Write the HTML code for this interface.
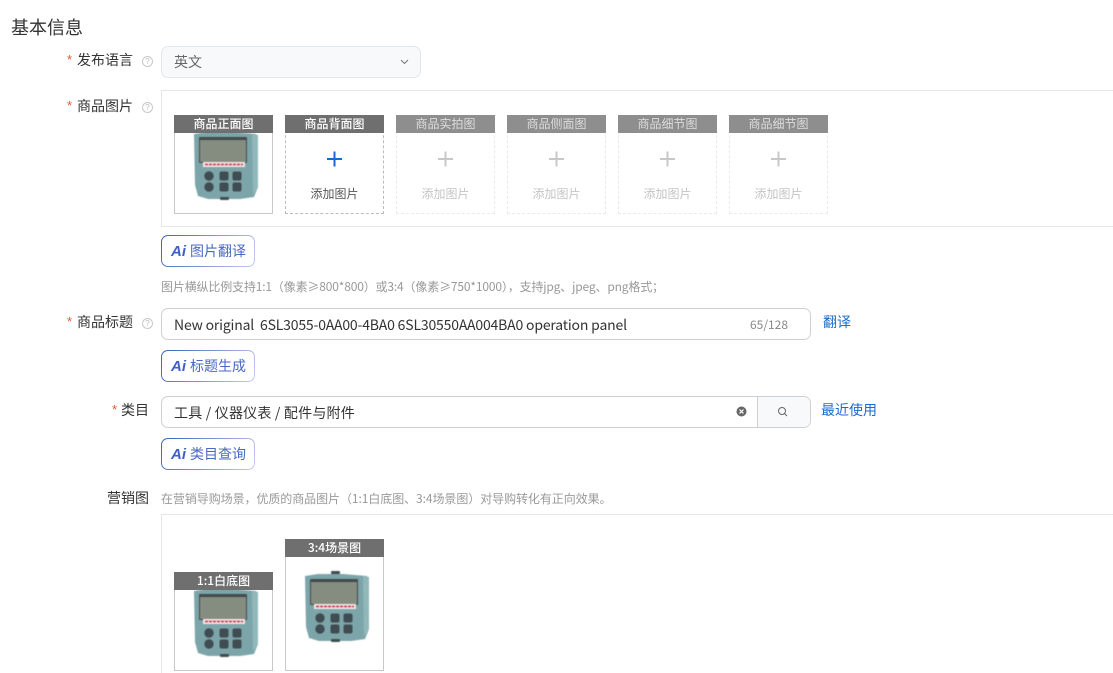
<!DOCTYPE html>
<html><head><meta charset="utf-8">
<style>
html,body{margin:0;padding:0;background:#fff;overflow:hidden;height:673px}
body{width:1113px;position:relative;font-family:"Noto Sans CJK SC","Liberation Sans",sans-serif;color:#333;font-size:14px}
.a{position:absolute;white-space:nowrap;line-height:18px}
.lbl{font-size:14px;color:#333}
.s{color:#e4572e;font-size:13px;font-family:"Liberation Sans",sans-serif}
.q{position:absolute;width:9px;height:9px;border:1px solid #c8c8c8;border-radius:50%;color:#bbb;font-size:8px;line-height:9px;text-align:center;font-family:"Liberation Sans",sans-serif}
.box{position:absolute;box-sizing:border-box;width:99px;height:99px;top:115px}
.hd{position:absolute;left:0;top:0;width:99px;height:18px;background:#6f6f6f;color:#fff;font-size:12px;font-weight:500;line-height:18px;text-align:center}
.ph{border:1px dashed #bbb}
.ph .hd{left:-1px;top:-1px}
.ph .pl{position:absolute;left:0;right:0;top:34px;height:18px}
.ph .t{position:absolute;left:0;right:0;top:69px;text-align:center;font-size:12px;line-height:18px;color:#555}
.off{border-color:#eaeaea}
.off .hd{background:#8e8e8e;color:#ddd;font-weight:400}
.off .t{color:#c4c4c4}
.panel{position:absolute;left:161px;width:960px;box-sizing:border-box;border:1px solid #e6e6e6}
.ai{position:absolute;left:161px;width:94px;height:32px;box-sizing:border-box;border-radius:7px;border:1px solid transparent;background:linear-gradient(#fff,#fff) padding-box,linear-gradient(120deg,#3a62b8,#c9c9f2) border-box;color:#4a68c4;font-size:14px;line-height:30px}
.ai b{position:absolute;left:9px;top:1px;font:italic bold 15px/29px "Liberation Sans",sans-serif;color:#3f60c8}
.ai span{position:absolute;left:28px;top:0}
.inp{position:absolute;box-sizing:border-box;border:1px solid #cfcfcf;border-radius:7px;background:#fff}
.link{color:#1a6bd0;font-size:14px}
.dev{position:absolute;filter:blur(.6px)}
</style></head><body>
<svg width="0" height="0" style="position:absolute"><defs>
<g id="d">
<path d="M20 19 L33 17 L58 17 L82 19 L84 30 L84 72 L80 82 L66 84 L34 84 L24 81 L21 70 Z" fill="#7ca5aa"/>
<path d="M78 19 L84 20 L84 72 L79 80 Z" fill="#90b8bb"/>
<rect x="25" y="22" width="48" height="26" rx="1" fill="#414b4c"/>
<rect x="26" y="25" width="46" height="22" fill="#858c80"/>
<rect x="29" y="47" width="42" height="5" fill="#f4e8e8"/>
<path d="M31 49.500 H69" stroke="#c0283a" stroke-width="1.600" stroke-dasharray="3 1"/>
<g fill="#3f4c52">
<circle cx="35" cy="61" r="4.700"/><circle cx="35" cy="72" r="4.700"/>
<rect x="45.500" y="56.500" width="9" height="9" rx="2"/><rect x="58.500" y="56.500" width="9" height="9" rx="2"/>
<rect x="45.500" y="67.500" width="9" height="9" rx="2"/><rect x="58.500" y="67.500" width="9" height="9" rx="2"/>
<rect x="46" y="14" width="9" height="3" rx="1"/><rect x="46" y="82" width="9" height="3" rx="1"/>
</g></g>
<path id="p" d="M0 -7.500V7.500M-7.500 0H7.500" fill="none" stroke-width="2"/>
</defs></svg>

<div class="a" style="left:11px;top:16px;font-size:18px;line-height:22px;color:#333">基本信息</div>

<div class="a s" style="left:67px;top:51px">*</div><div class="a lbl" style="left:77px;top:51px">发布语言</div>
<div class="q" style="left:142px;top:56px">?</div>
<div class="inp" style="left:161px;top:46px;width:260px;height:32px;background:#f7f9fb;border-color:#e3e6ea">
<div class="a" style="left:12px;top:6px;color:#666">英文</div>
<svg style="position:absolute;left:238px;top:12px" width="9" height="6"><path d="M1 1L4.500 4.500L8 1" fill="none" stroke="#777" stroke-width="1"/></svg></div>

<div class="a s" style="left:67px;top:97px">*</div><div class="a lbl" style="left:77px;top:97px">商品图片</div>
<div class="q" style="left:142px;top:102px">?</div>
<div class="panel" style="top:90px;height:137px"></div>

<div class="box" style="left:174px;border:1px solid #c8c8c8">
<svg class="dev" style="left:-1px;top:-1px" width="99" height="99"><use href="#d"/></svg>
<div class="hd" style="left:-1px;top:-1px">商品正面图</div></div>
<div class="box ph" style="left:285px"><div class="hd">商品背面图</div><svg class="pl" width="97" height="18"><use href="#p" x="48.500" y="9" stroke="#1a66d6"/></svg><div class="t">添加图片</div></div>
<div class="box ph off" style="left:396px"><div class="hd">商品实拍图</div><svg class="pl" width="97" height="18"><use href="#p" x="48.500" y="9" stroke="#c8c8c8"/></svg><div class="t">添加图片</div></div>
<div class="box ph off" style="left:507px"><div class="hd">商品侧面图</div><svg class="pl" width="97" height="18"><use href="#p" x="48.500" y="9" stroke="#c8c8c8"/></svg><div class="t">添加图片</div></div>
<div class="box ph off" style="left:618px"><div class="hd">商品细节图</div><svg class="pl" width="97" height="18"><use href="#p" x="48.500" y="9" stroke="#c8c8c8"/></svg><div class="t">添加图片</div></div>
<div class="box ph off" style="left:729px"><div class="hd">商品细节图</div><svg class="pl" width="97" height="18"><use href="#p" x="48.500" y="9" stroke="#c8c8c8"/></svg><div class="t">添加图片</div></div>

<div class="ai" style="top:235px"><b>Ai</b><span>图片翻译</span></div>
<div class="a" style="left:161px;top:278px;font-size:12px;color:#999;letter-spacing:-.16px">图片横纵比例支持1:1（像素≥800*800）或3:4（像素≥750*1000），支持jpg、jpeg、png格式；</div>

<div class="a s" style="left:67px;top:313px">*</div><div class="a lbl" style="left:77px;top:313px">商品标题</div>
<div class="q" style="left:142px;top:318px">?</div>
<div class="inp" style="left:161px;top:308px;width:650px;height:32px">
<div class="a" style="left:12px;top:7px;color:#333;white-space:pre;letter-spacing:-.18px">New original  6SL3055-0AA00-4BA0 6SL30550AA004BA0 operation panel</div>
<div class="a" style="left:588px;top:7px;font-size:12px;color:#888">65/128</div></div>
<div class="a link" style="left:823px;top:313px">翻译</div>
<div class="ai" style="top:350px"><b>Ai</b><span>标题生成</span></div>

<div class="a s" style="left:112px;top:401px">*</div><div class="a lbl" style="left:121px;top:401px">类目</div>
<div class="inp" style="left:161px;top:396px;width:650px;height:32px">
<div class="a" style="left:12px;top:7px;color:#333;letter-spacing:.2px">工具 / 仪器仪表 / 配件与附件</div>
<svg style="position:absolute;left:574px;top:9px" width="12" height="12"><circle cx="5.500" cy="5.500" r="5" fill="#666"/><path d="M3.500 3.500L7.500 7.500M7.500 3.500L3.500 7.500" stroke="#fff" stroke-width="1.200"/></svg>
<div style="position:absolute;left:595px;top:0;width:52px;height:30px;background:#f7f9fb;border-left:1px solid #cfcfcf;border-radius:0 6px 6px 0"></div>
<svg style="position:absolute;left:615px;top:9px" width="12" height="12"><circle cx="5" cy="5" r="3.500" fill="none" stroke="#666" stroke-width="1"/><path d="M7.500 7.500L10 10" stroke="#666" stroke-width="1"/></svg></div>
<div class="a link" style="left:821px;top:401px">最近使用</div>
<div class="ai" style="top:438px"><b>Ai</b><span>类目查询</span></div>

<div class="a lbl" style="left:107px;top:489px">营销图</div>
<div class="a" style="left:161px;top:490px;font-size:12px;color:#999;letter-spacing:-.07px">在营销导购场景，优质的商品图片（1:1白底图、3:4场景图）对导购转化有正向效果。</div>
<div class="panel" style="top:514px;height:159px;border-bottom:0"></div>

<div class="box" style="left:174px;top:572px;border:1px solid #c8c8c8">
<svg class="dev" style="left:-1px;top:-1px" width="99" height="99"><use href="#d"/></svg>
<div class="hd" style="left:-1px;top:-1px">1:1白底图</div></div>
<div class="box" style="left:285px;top:539px;height:132px;border:1px solid #c8c8c8">
<svg class="dev" style="left:-1px;top:17px" width="99" height="99"><use href="#d"/></svg>
<div class="hd" style="left:-1px;top:-1px">3:4场景图</div></div>
</body></html>
